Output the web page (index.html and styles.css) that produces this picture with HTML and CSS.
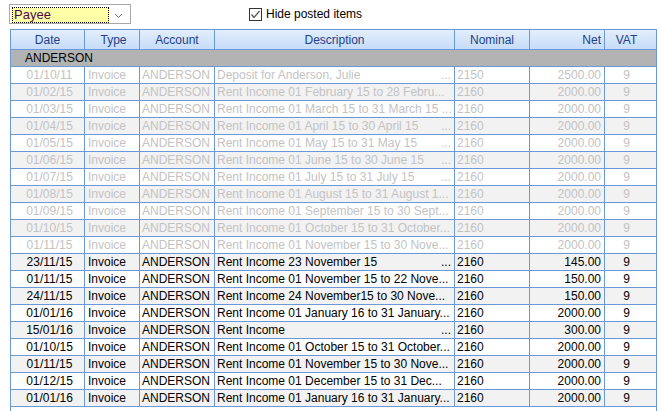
FILE: index.html
```html
<!DOCTYPE html>
<html>
<head>
<meta charset="utf-8">
<link rel="stylesheet" href="styles.css">
</head>
<body>
<div class="toolbar">
  <div class="combo">
    <div class="combo-field"><span>Payee</span></div>
    <div class="combo-btn">
      <svg width="9" height="6" viewBox="0 0 9 6"><polyline points="1,1 4.5,4.5 8,1" fill="none" stroke="#7a7a7a" stroke-width="1"/></svg>
    </div>
  </div>
  <label class="check">
    <span class="box"><svg width="11" height="11" viewBox="0 0 11 11"><polyline points="1.5,5.5 4,8.5 9.5,2" fill="none" stroke="#5a5a5a" stroke-width="1.4"/></svg></span>
    <span>Hide posted items</span>
  </label>
</div>

<div class="grid">
  <div class="row head">
    <div class="c center">Date</div>
    <div class="c center">Type</div>
    <div class="c center">Account</div>
    <div class="c center">Description</div>
    <div class="c center">Nominal</div>
    <div class="c right">Net</div>
    <div class="c vat">VAT</div>
  </div>
  <div class="group">ANDERSON</div>

  <div class="row posted"><div class="c date">01/10/11</div><div class="c">Invoice</div><div class="c">ANDERSON</div><div class="c desc"><span>Deposit for Anderson, Julie</span><span>...</span></div><div class="c">2150</div><div class="c right">2500.00</div><div class="c vat">9</div></div>
  <div class="row posted alt"><div class="c date">01/02/15</div><div class="c">Invoice</div><div class="c">ANDERSON</div><div class="c desc"><span>Rent Income 01 February 15 to 28 Febru...</span></div><div class="c">2160</div><div class="c right">2000.00</div><div class="c vat">9</div></div>
  <div class="row posted"><div class="c date">01/03/15</div><div class="c">Invoice</div><div class="c">ANDERSON</div><div class="c desc"><span>Rent Income 01 March 15 to 31 March 15 ...</span></div><div class="c">2160</div><div class="c right">2000.00</div><div class="c vat">9</div></div>
  <div class="row posted alt"><div class="c date">01/04/15</div><div class="c">Invoice</div><div class="c">ANDERSON</div><div class="c desc"><span>Rent Income 01 April 15 to 30 April 15</span><span>...</span></div><div class="c">2160</div><div class="c right">2000.00</div><div class="c vat">9</div></div>
  <div class="row posted"><div class="c date">01/05/15</div><div class="c">Invoice</div><div class="c">ANDERSON</div><div class="c desc"><span>Rent Income 01 May 15 to 31 May 15</span><span>...</span></div><div class="c">2160</div><div class="c right">2000.00</div><div class="c vat">9</div></div>
  <div class="row posted alt"><div class="c date">01/06/15</div><div class="c">Invoice</div><div class="c">ANDERSON</div><div class="c desc"><span>Rent Income 01 June 15 to 30 June 15</span><span>...</span></div><div class="c">2160</div><div class="c right">2000.00</div><div class="c vat">9</div></div>
  <div class="row posted"><div class="c date">01/07/15</div><div class="c">Invoice</div><div class="c">ANDERSON</div><div class="c desc"><span>Rent Income 01 July 15 to 31 July 15</span><span>...</span></div><div class="c">2160</div><div class="c right">2000.00</div><div class="c vat">9</div></div>
  <div class="row posted alt"><div class="c date">01/08/15</div><div class="c">Invoice</div><div class="c">ANDERSON</div><div class="c desc"><span>Rent Income 01 August 15 to 31 August 1...</span></div><div class="c">2160</div><div class="c right">2000.00</div><div class="c vat">9</div></div>
  <div class="row posted"><div class="c date">01/09/15</div><div class="c">Invoice</div><div class="c">ANDERSON</div><div class="c desc"><span>Rent Income 01 September 15 to 30 Sept...</span></div><div class="c">2160</div><div class="c right">2000.00</div><div class="c vat">9</div></div>
  <div class="row posted alt"><div class="c date">01/10/15</div><div class="c">Invoice</div><div class="c">ANDERSON</div><div class="c desc"><span>Rent Income 01 October 15 to 31 October...</span></div><div class="c">2160</div><div class="c right">2000.00</div><div class="c vat">9</div></div>
  <div class="row posted"><div class="c date">01/11/15</div><div class="c">Invoice</div><div class="c">ANDERSON</div><div class="c desc"><span>Rent Income 01 November 15 to 30 Nove...</span></div><div class="c">2160</div><div class="c right">2000.00</div><div class="c vat">9</div></div>

  <div class="row alt"><div class="c date">23/11/15</div><div class="c">Invoice</div><div class="c">ANDERSON</div><div class="c desc"><span>Rent Income 23 November 15</span><span>...</span></div><div class="c">2160</div><div class="c right">145.00</div><div class="c vat">9</div></div>
  <div class="row"><div class="c date">01/11/15</div><div class="c">Invoice</div><div class="c">ANDERSON</div><div class="c desc"><span>Rent Income 01 November 15 to 22 Nove...</span></div><div class="c">2160</div><div class="c right">150.00</div><div class="c vat">9</div></div>
  <div class="row alt"><div class="c date">24/11/15</div><div class="c">Invoice</div><div class="c">ANDERSON</div><div class="c desc"><span>Rent Income 24 November15 to 30 Nove...</span></div><div class="c">2160</div><div class="c right">150.00</div><div class="c vat">9</div></div>
  <div class="row"><div class="c date">01/01/16</div><div class="c">Invoice</div><div class="c">ANDERSON</div><div class="c desc"><span>Rent Income 01 January 16 to 31 January...</span></div><div class="c">2160</div><div class="c right">2000.00</div><div class="c vat">9</div></div>
  <div class="row alt"><div class="c date">15/01/16</div><div class="c">Invoice</div><div class="c">ANDERSON</div><div class="c desc"><span>Rent Income</span><span>...</span></div><div class="c">2160</div><div class="c right">300.00</div><div class="c vat">9</div></div>
  <div class="row"><div class="c date">01/10/15</div><div class="c">Invoice</div><div class="c">ANDERSON</div><div class="c desc"><span>Rent Income 01 October 15 to 31 October...</span></div><div class="c">2160</div><div class="c right">2000.00</div><div class="c vat">9</div></div>
  <div class="row alt"><div class="c date">01/11/15</div><div class="c">Invoice</div><div class="c">ANDERSON</div><div class="c desc"><span>Rent Income 01 November 15 to 30 Nove...</span></div><div class="c">2160</div><div class="c right">2000.00</div><div class="c vat">9</div></div>
  <div class="row"><div class="c date">01/12/15</div><div class="c">Invoice</div><div class="c">ANDERSON</div><div class="c desc"><span>Rent Income 01 December 15 to 31 Dec...</span></div><div class="c">2160</div><div class="c right">2000.00</div><div class="c vat">9</div></div>
  <div class="row alt"><div class="c date">01/01/16</div><div class="c">Invoice</div><div class="c">ANDERSON</div><div class="c desc"><span>Rent Income 01 January 16 to 31 January...</span></div><div class="c">2160</div><div class="c right">2000.00</div><div class="c vat">9</div></div>
  <div class="filler"></div>
</div>
</body>
</html>
```

FILE: styles.css
```css
* { box-sizing: border-box; }
html, body {
  margin: 0;
  padding: 0;
  background: #ffffff;
  font-family: "Liberation Sans", Arial, sans-serif;
  font-size: 12px;
  color: #000;
  overflow: hidden;
}
.toolbar {
  height: 29px;
  display: flex;
  align-items: flex-start;
}
.combo {
  margin-left: 9px;
  margin-top: 4px;
  width: 122px;
  height: 20px;
  border: 1px solid #a8a8a8;
  display: flex;
  padding: 2px;
  background: #fff;
}
.combo-field {
  width: 97px;
  height: 16px;
  background: #ffffa8;
  border: 1px dotted #000;
  color: #4a0a4a;
  line-height: 14px;
  padding-left: 1px;
  font-size: 13px;
}
.combo-btn {
  flex: 1;
  display: flex;
  align-items: center;
  justify-content: center;
  padding-top: 3px;
}
.check {
  margin-left: 118px;
  margin-top: 8px;
  display: flex;
  align-items: center;
  gap: 4px;
  line-height: 13px;
}
.box {
  width: 13px;
  height: 13px;
  border: 1px solid #333;
  background: #fff;
  display: flex;
  align-items: center;
  justify-content: center;
}
.grid {
  margin-left: 10px;
  width: 647px;
  border-left: 1px solid #6d98d8;
  border-top: 1px solid #6d98d8;
}
.row {
  display: grid;
  grid-template-columns: 74px 55px 75px 240px 75px 75px 52px;
  height: 17px;
  border-bottom: 1px solid #6d98d8;
}
.c {
  border-right: 1px solid #6d98d8;
  line-height: 15px;
  padding-top: 1px;
  white-space: nowrap;
  overflow: hidden;
  padding-left: 2px;
}
.row .c:nth-child(2) { padding-left: 3px; }
.head {
  height: 20px;
  background: linear-gradient(#e3eefc, #c6dcf8);
  color: #22418c;
}
.head .c { line-height: 18px; padding-top: 1px; }
.center { text-align: center; padding-left: 0; }
.right { text-align: right; padding-right: 3px; }
.vat { text-align: center; padding-left: 0; padding-right: 8px; }
.date { text-align: center; padding-left: 4px; }
.desc {
  display: flex;
  justify-content: space-between;
  padding-right: 3px;
}
.desc span { overflow: hidden; }
.group {
  height: 17px;
  background: #b3b3b3;
  border-right: 1px solid #6d98d8;
  border-bottom: 1px solid #6d98d8;
  line-height: 15px;
  padding-top: 1px;
  padding-left: 14px;
}
.alt { background: #f2f2f2; }
.posted { color: #c3c3c3; }
.filler {
  height: 20px;
  border-right: 1px solid #6d98d8;
}
```
